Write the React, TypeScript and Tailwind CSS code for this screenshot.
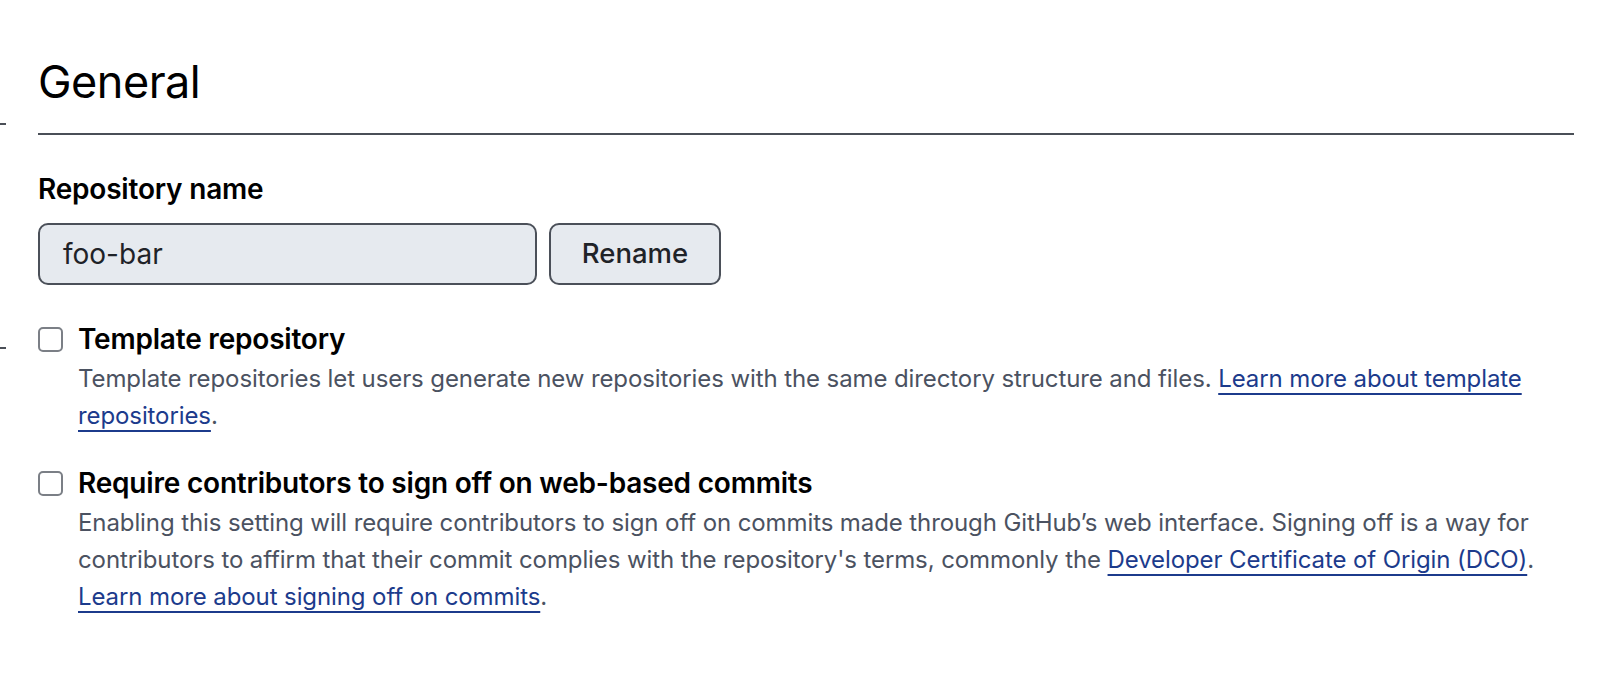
import React from "react";

function Checkbox() {
  return <div className="mt-[2px] h-[25px] w-[25px] shrink-0 rounded-[5px] border-2 border-[#7b7f86] bg-white" />;
}

function Link({ children }: { children: React.ReactNode }) {
  return (
    <a className="text-[#1c3b8c] underline decoration-[2px] underline-offset-[6px]" href="#">
      {children}
    </a>
  );
}

export default function App() {
  return (
    <div className="flex min-h-[680px] w-[1602px] bg-white text-black" style={{ fontFamily: "Inter, 'Liberation Sans', sans-serif" }}>
      <div className="flex w-[38px] shrink-0 flex-col">
        <div className="mt-[123px] h-[2px] w-[6px] bg-[#4a4f57]" />
        <div className="mt-[222px] h-[2px] w-[6px] bg-[#4a4f57]" />
      </div>
      <div className="flex w-[1536px] flex-col">
        <h2 className="mt-[52px] text-[45px] leading-[60px] tracking-[-0.5px]">General</h2>
        <div className="mt-[21px] h-[2px] w-full bg-[#4a4f57]" />
        <label className="mt-[38px] text-[28px] font-semibold leading-[32px] tracking-[-0.2px]">Repository name</label>
        <div className="mt-[18px] flex gap-[12px]">
          <div className="flex h-[62px] w-[499px] items-center rounded-[10px] border-2 border-[#4b5059] bg-[#e6eaef] px-[23px] text-[28px] text-[#1f2328]">
            foo-bar
          </div>
          <div className="flex h-[62px] w-[172px] items-center justify-center rounded-[10px] border-2 border-[#4b5059] bg-[#e6eaef] text-[27.5px] font-medium text-[#1f2328]">
            Rename
          </div>
        </div>
        <div className="mt-[40px] flex gap-[15px]">
          <Checkbox />
          <div className="flex flex-col">
            <div className="text-[28px] font-semibold leading-[28px] tracking-[-0.2px]">Template repository</div>
            <p className="mt-[7px] text-[24px] leading-[37px] text-[#4b5261] tracking-[-0.1px]">
              Template repositories let users generate new repositories with the same directory structure and files.{" "}
              <Link>Learn more about template repositories</Link>.
            </p>
          </div>
        </div>
        <div className="mt-[35px] flex gap-[15px]">
          <Checkbox />
          <div className="flex flex-col">
            <div className="text-[28px] font-semibold leading-[28px] tracking-[-0.2px]">
              Require contributors to sign off on web-based commits
            </div>
            <p className="mt-[7px] text-[24px] leading-[37px] text-[#4b5261] tracking-[-0.1px]">
              Enabling this setting will require contributors to sign off on commits made through GitHub’s web interface. Signing off is a way for
              contributors to affirm that their commit complies with the repository's terms, commonly the{" "}
              <Link>Developer Certificate of Origin (DCO)</Link>. <Link>Learn more about signing off on commits</Link>.
            </p>
          </div>
        </div>
      </div>
    </div>
  );
}
